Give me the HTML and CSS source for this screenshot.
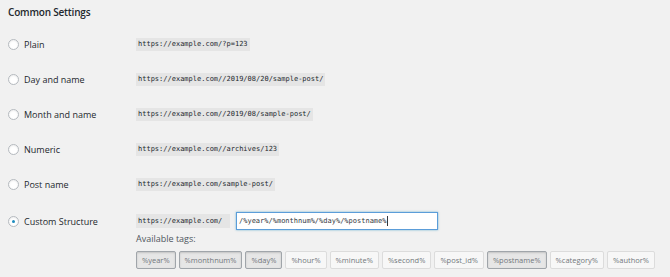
FILE: index.html
```html
<!DOCTYPE html>
<html lang="en">
<head>
    <meta charset="UTF-8">
    <meta name="viewport" content="width=device-width, initial-scale=1.0">
    <title>Permalink Settings</title>
    <link rel="stylesheet" href="styles.css">
</head>
<body>

    <h2 class="section-title">Common Settings</h2>

    <div class="option-row">
        <label class="option-label"><span class="radio"></span>Plain</label>
        <code class="sample">https://example.com/?p=123</code>
    </div>
    <div class="option-row">
        <label class="option-label"><span class="radio"></span>Day and name</label>
        <code class="sample">https://example.com//2019/08/20/sample-post/</code>
    </div>
    <div class="option-row">
        <label class="option-label"><span class="radio"></span>Month and name</label>
        <code class="sample">https://example.com//2019/08/sample-post/</code>
    </div>
    <div class="option-row">
        <label class="option-label"><span class="radio"></span>Numeric</label>
        <code class="sample">https://example.com//archives/123</code>
    </div>
    <div class="option-row">
        <label class="option-label"><span class="radio"></span>Post name</label>
        <code class="sample">https://example.com/sample-post/</code>
    </div>

    <div class="custom-row">
        <label class="option-label"><span class="radio checked"></span>Custom Structure</label>
        <div class="custom-body">
            <div class="custom-line">
                <code class="sample base">https://example.com/</code>
                <div class="structure-input">/%year%/%monthnum%/%day%/%postname%<span class="caret"></span></div>
            </div>
            <div class="tags-title">Available tags:</div>
            <div class="tags">
                <button class="tag active">%year%</button>
                <button class="tag active">%monthnum%</button>
                <button class="tag active">%day%</button>
                <button class="tag">%hour%</button>
                <button class="tag">%minute%</button>
                <button class="tag">%second%</button>
                <button class="tag">%post_id%</button>
                <button class="tag active">%postname%</button>
                <button class="tag">%category%</button>
                <button class="tag">%author%</button>
            </div>
        </div>
    </div>

</body>
</html>
```

FILE: styles.css
```css
body {
    font-family: "Open Sans", "Noto Sans", sans-serif;
    font-size: 9px;
    color: #23282d;
    background-color: #f1f1f1;
    margin: 0;
    padding: 0 8px;
}

.section-title {
    margin: 0;
    height: 27px;
    line-height: 24px;
    font-size: 10px;
    font-weight: 600;
    letter-spacing: -0.2px;
}

.option-row {
    display: flex;
    align-items: center;
    height: 35px;
}

.option-label {
    display: flex;
    align-items: center;
    width: 128px;
    flex-shrink: 0;
}

.radio {
    width: 9px;
    height: 9px;
    border: 1px solid #b4b9be;
    border-radius: 50%;
    background-color: #fff;
    margin: 0 5px 0 0;
    box-shadow: inset 0 1px 2px rgba(0, 0, 0, 0.07);
    display: flex;
    align-items: center;
    justify-content: center;
}

.radio.checked::after {
    content: "";
    width: 3px;
    height: 3px;
    border-radius: 50%;
    background-color: #1e8cbe;
}

.sample {
    font-family: "DejaVu Sans Mono", "Liberation Mono", monospace;
    font-size: 7px;
    line-height: 13px;
    background-color: #e5e5e5;
    padding: 0 2px;
}

.custom-row {
    display: flex;
    align-items: flex-start;
    padding-top: 10px;
}

.custom-row .option-label {
    height: 18px;
}

.custom-body {
    display: flex;
    flex-direction: column;
}

.custom-line {
    display: flex;
    align-items: center;
    height: 18px;
}

.sample.base {
    width: 90px;
    line-height: 14px;
}

.structure-input {
    margin-left: 6px;
    width: 196px;
    height: 16px;
    line-height: 16px;
    padding: 0 2px;
    background-color: #fff;
    border: 1px solid #5b9dd9;
    box-shadow: 0 0 2px rgba(30, 140, 190, 0.6);
    font-family: "DejaVu Sans Mono", "Liberation Mono", monospace;
    font-size: 7px;
    color: #32373c;
}

.caret {
    display: inline-block;
    width: 1px;
    height: 10px;
    background-color: #32373c;
    vertical-align: middle;
}

.tags-title {
    height: 16px;
    line-height: 16px;
    margin-top: 1px;
    color: #50575e;
}

.tags {
    display: flex;
    gap: 3px;
    margin-top: 4px;
}

.tag {
    font-family: "Open Sans", "Noto Sans", sans-serif;
    font-size: 7.5px;
    height: 18px;
    margin: 0;
    padding: 0 5px;
    color: #72777c;
    background-color: #f7f7f7;
    border: 1px solid #dcdcdc;
    border-radius: 2px;
    cursor: pointer;
}

.tag.active {
    background-color: #e6e6e6;
    border-color: #a0a5aa;
    box-shadow: inset 0 1px 2px rgba(0, 0, 0, 0.15);
}
```
